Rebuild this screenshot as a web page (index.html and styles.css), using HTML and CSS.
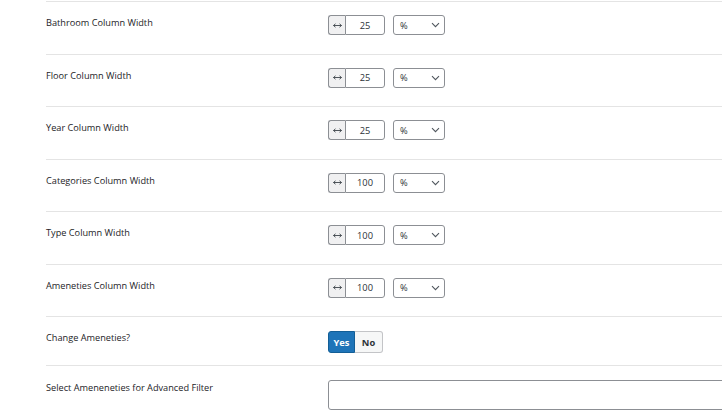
FILE: index.html
```html
<!DOCTYPE html>
<html>
<head>
<meta charset="utf-8">
<link rel="stylesheet" href="styles.css">
</head>
<body>
<div class="table">
  <div class="row">
    <div class="label">Bathroom Column Width</div>
    <div class="field">
      <div class="group">
        <span class="addon"><svg width="9" height="5" viewBox="0 0 9 5"><path d="M0.5 2.5H8.5M0.5 2.5L2.5 0.8M0.5 2.5L2.5 4.2M8.5 2.5L6.5 0.8M8.5 2.5L6.5 4.2" stroke="#3c434a" stroke-width="0.9" fill="none"/></svg></span>
        <span class="num">25</span>
      </div>
      <div class="select"><span>%</span><svg width="9" height="6" viewBox="0 0 9 6"><path d="M1 1.2L4.5 4.7L8 1.2" stroke="#50575e" stroke-width="1.1" fill="none"/></svg></div>
    </div>
  </div>
  <div class="row">
    <div class="label">Floor Column Width</div>
    <div class="field">
      <div class="group">
        <span class="addon"><svg width="9" height="5" viewBox="0 0 9 5"><path d="M0.5 2.5H8.5M0.5 2.5L2.5 0.8M0.5 2.5L2.5 4.2M8.5 2.5L6.5 0.8M8.5 2.5L6.5 4.2" stroke="#3c434a" stroke-width="0.9" fill="none"/></svg></span>
        <span class="num">25</span>
      </div>
      <div class="select"><span>%</span><svg width="9" height="6" viewBox="0 0 9 6"><path d="M1 1.2L4.5 4.7L8 1.2" stroke="#50575e" stroke-width="1.1" fill="none"/></svg></div>
    </div>
  </div>
  <div class="row">
    <div class="label">Year Column Width</div>
    <div class="field">
      <div class="group">
        <span class="addon"><svg width="9" height="5" viewBox="0 0 9 5"><path d="M0.5 2.5H8.5M0.5 2.5L2.5 0.8M0.5 2.5L2.5 4.2M8.5 2.5L6.5 0.8M8.5 2.5L6.5 4.2" stroke="#3c434a" stroke-width="0.9" fill="none"/></svg></span>
        <span class="num">25</span>
      </div>
      <div class="select"><span>%</span><svg width="9" height="6" viewBox="0 0 9 6"><path d="M1 1.2L4.5 4.7L8 1.2" stroke="#50575e" stroke-width="1.1" fill="none"/></svg></div>
    </div>
  </div>
  <div class="row">
    <div class="label">Categories Column Width</div>
    <div class="field">
      <div class="group">
        <span class="addon"><svg width="9" height="5" viewBox="0 0 9 5"><path d="M0.5 2.5H8.5M0.5 2.5L2.5 0.8M0.5 2.5L2.5 4.2M8.5 2.5L6.5 0.8M8.5 2.5L6.5 4.2" stroke="#3c434a" stroke-width="0.9" fill="none"/></svg></span>
        <span class="num">100</span>
      </div>
      <div class="select"><span>%</span><svg width="9" height="6" viewBox="0 0 9 6"><path d="M1 1.2L4.5 4.7L8 1.2" stroke="#50575e" stroke-width="1.1" fill="none"/></svg></div>
    </div>
  </div>
  <div class="row">
    <div class="label">Type Column Width</div>
    <div class="field">
      <div class="group">
        <span class="addon"><svg width="9" height="5" viewBox="0 0 9 5"><path d="M0.5 2.5H8.5M0.5 2.5L2.5 0.8M0.5 2.5L2.5 4.2M8.5 2.5L6.5 0.8M8.5 2.5L6.5 4.2" stroke="#3c434a" stroke-width="0.9" fill="none"/></svg></span>
        <span class="num">100</span>
      </div>
      <div class="select"><span>%</span><svg width="9" height="6" viewBox="0 0 9 6"><path d="M1 1.2L4.5 4.7L8 1.2" stroke="#50575e" stroke-width="1.1" fill="none"/></svg></div>
    </div>
  </div>
  <div class="row">
    <div class="label">Ameneties Column Width</div>
    <div class="field">
      <div class="group">
        <span class="addon"><svg width="9" height="5" viewBox="0 0 9 5"><path d="M0.5 2.5H8.5M0.5 2.5L2.5 0.8M0.5 2.5L2.5 4.2M8.5 2.5L6.5 0.8M8.5 2.5L6.5 4.2" stroke="#3c434a" stroke-width="0.9" fill="none"/></svg></span>
        <span class="num">100</span>
      </div>
      <div class="select"><span>%</span><svg width="9" height="6" viewBox="0 0 9 6"><path d="M1 1.2L4.5 4.7L8 1.2" stroke="#50575e" stroke-width="1.1" fill="none"/></svg></div>
    </div>
  </div>
  <div class="row row-switch">
    <div class="label">Change Ameneties?</div>
    <div class="field">
      <div class="toggle">
        <span class="opt opt-on">Yes</span>
        <span class="opt opt-off">No</span>
      </div>
    </div>
  </div>
  <div class="row row-last">
    <div class="label label-last">Select Ameneneties for Advanced Filter</div>
    <div class="field field-last">
      <div class="multi"></div>
    </div>
  </div>
</div>
</body>
</html>
```

FILE: styles.css
```css
html, body {
  margin: 0;
  padding: 0;
  background: #ffffff;
  overflow: hidden;
}
body {
  font-family: "Open Sans", "Noto Sans", sans-serif;
  color: #1d2327;
}
.table {
  padding-top: 1px;
  margin-left: 46px;
}
.row {
  display: grid;
  grid-template-columns: 282px 1fr;
  height: 52.5px;
  box-sizing: border-box;
  border-top: 1px solid #e4e4e4;
}
.row-switch {
  height: 49px;
}
.label {
  padding-top: 14px;
  font-size: 9.2px;
  line-height: 13px;
  color: #1d2327;
}
.label-last {
  padding-top: 15px;
}
.field {
  padding-top: 13px;
  display: flex;
  align-items: flex-start;
  gap: 8px;
}
.field-last {
  padding-top: 14px;
}
.group {
  display: flex;
  height: 20px;
}
.addon {
  width: 17px;
  box-sizing: border-box;
  height: 20px;
  background: #f0f0f1;
  border: 1px solid #8c8f94;
  border-right: none;
  border-radius: 3px 0 0 3px;
  display: flex;
  align-items: center;
  justify-content: center;
}
.num {
  width: 40px;
  box-sizing: border-box;
  height: 20px;
  border: 1px solid #8c8f94;
  border-radius: 0 3px 3px 0;
  display: flex;
  align-items: center;
  justify-content: center;
  font-size: 9.3px;
  color: #2c3338;
}
.select {
  width: 52px;
  height: 20px;
  box-sizing: border-box;
  border: 1px solid #8c8f94;
  border-radius: 3px;
  display: flex;
  align-items: center;
  justify-content: space-between;
  padding: 0 4px 0 6px;
  font-size: 9.3px;
  color: #2c3338;
}
.toggle {
  display: flex;
  height: 22px;
  margin-top: 1px;
}
.opt {
  display: flex;
  align-items: center;
  justify-content: center;
  box-sizing: border-box;
  height: 22px;
  font-size: 9.3px;
  font-weight: 700;
}
.opt-on {
  width: 27px;
  background: #1e74b8;
  color: #ffffff;
  border: 1px solid #135e96;
  border-radius: 3px 0 0 3px;
}
.opt-off {
  width: 28px;
  background: #f6f7f7;
  color: #2c3338;
  border: 1px solid #c3c4c7;
  border-left: none;
  border-radius: 0 3px 3px 0;
}
.multi {
  width: 420px;
  height: 30px;
  box-sizing: border-box;
  border: 1px solid #8c8f94;
  border-radius: 3px;
  flex: none;
}
```
